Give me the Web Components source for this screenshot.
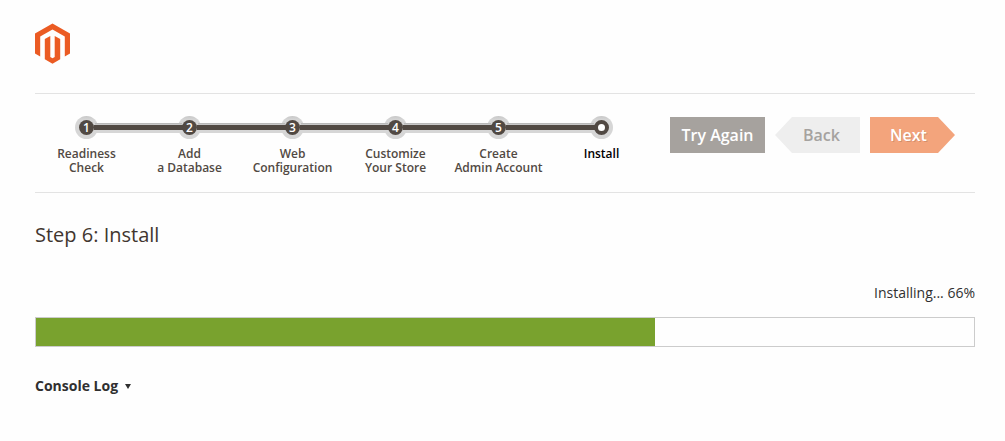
<!DOCTYPE html>
<html lang="en">
<head>
<meta charset="utf-8">
<meta name="viewport" content="width=device-width, initial-scale=1">
<title>Magento Installation</title>
<style>
body { margin: 0; background: #fefefe; color: #303030; font: 14px/20px "Open Sans", "Noto Sans", sans-serif; }
</style>
</head>
<body>
<setup-page>
  <brand-logo slot="logo"></brand-logo>
  <step-list slot="steps">
    <step-item number="1">Readiness<br>Check</step-item>
    <step-item number="2">Add<br>a Database</step-item>
    <step-item number="3">Web<br>Configuration</step-item>
    <step-item number="4">Customize<br>Your Store</step-item>
    <step-item number="5">Create<br>Admin Account</step-item>
    <step-item current>Install</step-item>
  </step-list>
  <nav-button slot="actions" kind="retry">Try Again</nav-button>
  <nav-button slot="actions" kind="back">Back</nav-button>
  <nav-button slot="actions" kind="next">Next</nav-button>
  <span slot="title">Step 6: Install</span>
  <install-progress value="66"></install-progress>
  <console-toggle>Console Log</console-toggle>
</setup-page>

<script>
function define(name, html, setup) {
  const template = document.createElement('template');
  template.innerHTML = html;
  customElements.define(name, class extends HTMLElement {
    constructor() {
      super();
      this.attachShadow({ mode: 'open' }).append(template.content.cloneNode(true));
    }
    connectedCallback() {
      if (setup) setup(this, this.shadowRoot);
    }
  });
}

define('setup-page', `
  <style>
    :host { display: block; padding: 23px 30px 45px 35px; }
    header { display: flex; padding-bottom: 29px; }
    .bar { display: flex; gap: 17px; border: solid #e3e3e3; border-width: 1px 0; padding: 22px 20px 17px 0; }
    .steps { flex: 1; min-width: 0; }
    .actions { display: flex; gap: 10px; align-items: flex-start; padding-top: 1px; }
    h1 { margin: 28px 0 34px; font-size: 20px; line-height: 28px; font-weight: 400; color: #41362f; }
    @media (max-width: 860px) { .bar { flex-direction: column; } .steps { flex: none; } }
  </style>
  <header><slot name="logo"></slot></header>
  <div class="bar">
    <nav class="steps" aria-label="Installation steps"><slot name="steps"></slot></nav>
    <div class="actions"><slot name="actions"></slot></div>
  </div>
  <main>
    <h1><slot name="title"></slot></h1>
    <slot></slot>
  </main>`);

define('brand-logo', `
  <style>
    :host { display: block; }
    svg { display: block; width: 35px; height: 41px; }
  </style>
  <svg viewBox="0 0 35 41" fill="#eb5b23" role="img" aria-label="Magento">
    <path d="M17.5 0.5 35 10.4v20.2l-5.2 3V13.5L17.5 6.6 5.2 13.5v20.1L0 30.6V10.4z"/>
    <path d="M15.3 13v21l2.2 1.3 2.2-1.3V13l5.5 2.9v20.3l-7.7 4.5-7.7-4.5V15.9z"/>
  </svg>`);

define('step-list', `
  <style>
    :host { display: block; }
    div { display: grid; grid-template-columns: repeat(6, 1fr); isolation: isolate; }
  </style>
  <div role="list"><slot></slot></div>`);

define('step-item', `
  <style>
    :host { display: flex; flex-direction: column; align-items: center; gap: 8px; position: relative;
      color: #514943; font-size: 12px; line-height: 14px; font-weight: 600; text-align: center; }
    :host([current]) { color: #000; }
    .halo { display: grid; place-items: center; width: 23px; height: 23px; border-radius: 50%;
      background: linear-gradient(#c8c8c8, #d6d6d6 4px); }
    .dot { display: grid; place-items: center; box-sizing: border-box; width: 15px; height: 15px;
      border-radius: 50%; background: #514943; color: #fff; z-index: 3; }
    :host([current]) .dot { border: 4px solid #514943; background: #fff; }
    :host(:not(:first-child))::before, :host(:not(:first-child))::after {
      content: ""; position: absolute; right: 50%; }
    :host(:not(:first-child))::before { top: 7px; height: 10px; background: linear-gradient(#b8b8b8 1px, #d6d6d6 2px);
      z-index: 1; margin-right: 8px; width: calc(100% - 16px); }
    :host(:not(:first-child))::after { top: 9px; height: 5px; background: #514943;
      z-index: 2; margin-right: 7px; width: calc(100% - 14px); }
  </style>
  <span class="halo"><span class="dot"></span></span>
  <span><slot></slot></span>`, (host, root) => {
    host.setAttribute('role', 'listitem');
    if (host.hasAttribute('current')) host.setAttribute('aria-current', 'step');
    root.querySelector('.dot').textContent = host.getAttribute('number') || '';
  });

define('nav-button', `
  <style>
    :host { display: block; }
    button { display: block; box-sizing: border-box; height: 36px; min-width: 85px; margin: 0; border: 0;
      padding: 0 10px; font: 600 16px/36px "Open Sans", "Noto Sans", sans-serif; color: #fff;
      background: #a6a29e; cursor: pointer; white-space: nowrap; }
    :host([kind=retry]) button { min-width: 95px; }
    :host([kind=back]) button { padding: 0 12px 0 20px; background: #eee; color: #a5a29f;
      clip-path: polygon(17px 0, 100% 0, 100% 100%, 17px 100%, 0 50%); }
    :host([kind=next]) button { padding: 0 20px 0 12px; background: #f3a47c;
      text-shadow: 1px 1px 0 rgba(0, 0, 0, .15);
      clip-path: polygon(0 0, calc(100% - 17px) 0, 100% 50%, calc(100% - 17px) 100%, 0 100%); }
  </style>
  <button type="button"><slot></slot></button>`);

define('install-progress', `
  <style>
    :host { display: block; margin-bottom: 29px; }
    label { display: block; margin-bottom: 14px; text-align: right; }
    progress { display: block; box-sizing: border-box; width: 100%; height: 30px; appearance: none;
      -webkit-appearance: none; border: 1px solid #ccc; border-radius: 0; background: #fefefe; }
    progress::-webkit-progress-bar { background: #fefefe; }
    progress::-webkit-progress-value { background: #79a22e; }
    progress::-moz-progress-bar { background: #79a22e; }
  </style>
  <label for="bar"></label>
  <progress id="bar" max="100"></progress>`, (host, root) => {
    const value = host.getAttribute('value');
    root.querySelector('label').textContent = 'Installing... ' + value + '%';
    root.querySelector('progress').value = value;
  });

define('console-toggle', `
  <style>
    :host { display: block; }
    button { display: flex; align-items: center; gap: 7px; margin: 0; border: 0; padding: 0; background: none;
      color: #303030; font: 700 14px/20px "Open Sans", "Noto Sans", sans-serif; cursor: pointer; }
    svg { display: block; width: 6px; height: 5px; }
  </style>
  <button type="button" aria-expanded="false"><slot></slot>
    <svg viewBox="0 0 6 5" fill="#303030" aria-hidden="true"><path d="M0 0h6L3 5z"/></svg>
  </button>`);
</script>
</body>
</html>
